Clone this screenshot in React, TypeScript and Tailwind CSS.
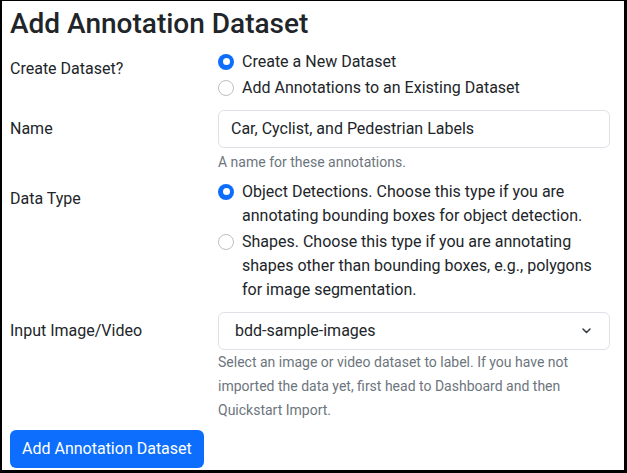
import React from "react";

function Radio({ checked, label }: { checked?: boolean; label: string }) {
  return (
    <div className="flex items-start mb-[2px]">
      {checked ? (
        <span className="mt-1 w-4 h-4 shrink-0 rounded-full bg-[#0d6efd] flex items-center justify-center">
          <span className="w-[7px] h-[7px] rounded-full bg-white" />
        </span>
      ) : (
        <span className="mt-1 w-4 h-4 shrink-0 rounded-full border border-[#bfbfbf] bg-white" />
      )}
      <span className="ml-2 leading-6">{label}</span>
    </div>
  );
}

export default function App() {
  return (
    <div
      className="w-[627px] h-[473px] bg-white border-black border-l-2 border-t border-r-[3px] border-b-[3px] overflow-hidden pl-2 pr-[14px] text-base text-[#212529]"
      style={{ fontFamily: "Roboto, 'Noto Sans', sans-serif" }}
    >
      <h2 className="mt-[6px] text-[28px] font-medium leading-[1.2]">
        Add Annotation Dataset
      </h2>

      {/* create or add */}
      <div className="flex mt-[9px]">
        <label className="w-[208px] shrink-0 pt-[7px] leading-6">Create Dataset?</label>
        <div className="flex-1">
          <Radio checked label="Create a New Dataset" />
          <Radio label="Add Annotations to an Existing Dataset" />
        </div>
      </div>

      {/* name */}
      <div className="flex mt-2">
        <label className="w-[208px] shrink-0 pt-[7px] leading-6">Name</label>
        <div className="flex-1">
          <input
            className="w-full h-[38px] border border-[#dee2e6] rounded-md px-3 text-base outline-none"
            defaultValue="Car, Cyclist, and Pedestrian Labels"
          />
          <div className="mt-[2px] text-sm leading-6 text-[#6c757d]">
            A name for these annotations.
          </div>
        </div>
      </div>

      {/* data type */}
      <div className="flex mt-[6px]">
        <label className="w-[208px] shrink-0 pt-[7px] leading-6">Data Type</label>
        <div className="flex-1">
          <Radio
            checked
            label="Object Detections. Choose this type if you are annotating bounding boxes for object detection."
          />
          <Radio label="Shapes. Choose this type if you are annotating shapes other than bounding boxes, e.g., polygons for image segmentation." />
        </div>
      </div>

      {/* source */}
      <div className="flex mt-2">
        <label className="w-[208px] shrink-0 pt-[7px] leading-6">Input Image/Video</label>
        <div className="flex-1">
          <div className="relative h-[38px] border border-[#dee2e6] rounded-md pl-4 flex items-center">
            <span>bdd-sample-images</span>
            <svg
              className="absolute right-[18px] top-[15px]"
              width="9"
              height="6"
              viewBox="0 0 9 6"
              fill="none"
            >
              <path d="M1 1l3.5 3.5L8 1" stroke="#343a40" strokeWidth="1.5" strokeLinecap="round" strokeLinejoin="round" />
            </svg>
          </div>
          <div className="text-sm leading-6 text-[#6c757d]">
            Select an image or video dataset to label. If you have not imported the data yet, first head to Dashboard and then Quickstart Import.
          </div>
        </div>
      </div>

      <button className="mt-2 h-[38px] px-3 rounded-md bg-[#0d6efd] text-white text-base">
        Add Annotation Dataset
      </button>
    </div>
  );
}
